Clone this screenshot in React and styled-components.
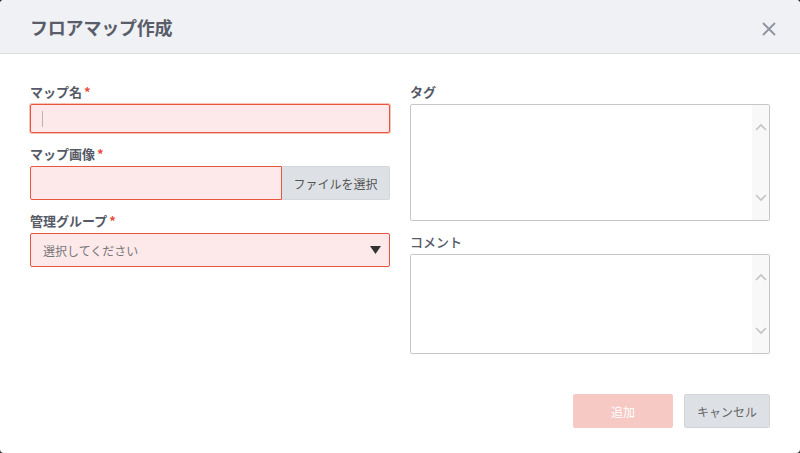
import React from 'react';
import styled, { createGlobalStyle } from 'styled-components';

const GlobalStyle = createGlobalStyle`
  html, body {
    margin: 0;
    padding: 0;
    background: #2b2b2b;
  }
  * {
    box-sizing: border-box;
  }
`;

const font = `"Noto Sans CJK JP", "Noto Sans", sans-serif`;

const Chevron = ({ up }) => (
  <svg width="12" height="8" viewBox="0 0 12 8">
    <path
      d={up ? 'M1 7 L6 2 L11 7' : 'M1 1 L6 6 L11 1'}
      fill="none"
      stroke="#c4c4c4"
      strokeWidth="1.6"
    />
  </svg>
);

const App = () => {
  return (
    <>
      <GlobalStyle />
      <Dialog>
        <Header>
          <Title>フロアマップ作成</Title>
          <CloseButton aria-label="close">
            <svg width="14" height="14" viewBox="0 0 14 14">
              <path d="M1 1 L13 13 M13 1 L1 13" stroke="#8e93a0" strokeWidth="1.8" />
            </svg>
          </CloseButton>
        </Header>
        <Body>
          <Column>
            <Field>
              <Label>
                マップ名<Required>*</Required>
              </Label>
              <TextInput focused>
                <Caret />
              </TextInput>
            </Field>
            <Field>
              <Label>
                マップ画像<Required>*</Required>
              </Label>
              <FileInput>
                <FileName />
                <FileButton>ファイルを選択</FileButton>
              </FileInput>
            </Field>
            <Field>
              <Label>
                管理グループ<Required>*</Required>
              </Label>
              <Select>
                <Placeholder>選択してください</Placeholder>
                <svg width="11" height="8" viewBox="0 0 11 8">
                  <path d="M0 0 L11 0 L5.5 8 Z" fill="#333" />
                </svg>
              </Select>
            </Field>
          </Column>
          <Column>
            <Field>
              <Label>タグ</Label>
              <TextareaBox height={117}>
                <Textarea />
                <ScrollTrack>
                  <Chevron up />
                  <Chevron />
                </ScrollTrack>
              </TextareaBox>
            </Field>
            <Field>
              <Label light>コメント</Label>
              <TextareaBox height={100}>
                <Textarea />
                <ScrollTrack>
                  <Chevron up />
                  <Chevron />
                </ScrollTrack>
              </TextareaBox>
            </Field>
          </Column>
        </Body>
        <Footer>
          <PrimaryButton disabled>追加</PrimaryButton>
          <SecondaryButton>キャンセル</SecondaryButton>
        </Footer>
      </Dialog>
    </>
  );
};

const Dialog = styled.div`
  width: 800px;
  height: 453px;
  background: #fff;
  border-radius: 4px;
  overflow: hidden;
  font-family: ${font};
  display: flex;
  flex-direction: column;
`;

const Header = styled.div`
  height: 54px;
  background: #f0f1f5;
  border-bottom: 1px solid #dcdde2;
  display: flex;
  align-items: center;
  justify-content: space-between;
  padding: 0 24px 0 30px;
`;

const Title = styled.h1`
  margin: 0;
  font-size: 18px;
  font-weight: 700;
  color: #595d69;
  letter-spacing: -0.2px;
`;

const CloseButton = styled.button`
  border: none;
  background: none;
  padding: 0;
  margin-top: 4px;
  display: flex;
  cursor: pointer;
`;

const Body = styled.div`
  display: grid;
  grid-template-columns: 360px 360px;
  column-gap: 20px;
  padding: 29px 30px 0 30px;
`;

const Column = styled.div`
  display: flex;
  flex-direction: column;
`;

const Field = styled.div`
  display: flex;
  flex-direction: column;
  margin-bottom: 12px;
`;

const Label = styled.label`
  font-size: 13px;
  font-weight: ${({ light }) => (light ? 500 : 700)};
  color: #555a66;
  line-height: 18px;
  margin-bottom: 3px;
`;

const Required = styled.span`
  color: #e74c3c;
  margin-left: 2px;
`;

const TextInput = styled.div`
  height: 29px;
  background: #fde8ea;
  border: 1px solid #e8553f;
  border-radius: 2px;
  box-shadow: ${({ focused }) => (focused ? '0 0 0 1px rgba(232, 85, 63, 0.35)' : 'none')};
  display: flex;
  align-items: center;
  padding-left: 11px;
`;

const Caret = styled.span`
  width: 1px;
  height: 16px;
  background: #b5b5b5;
`;

const FileInput = styled.div`
  height: 34px;
  display: flex;
`;

const FileName = styled.div`
  flex: 1;
  background: #fde8ea;
  border: 1px solid #e8553f;
  border-radius: 2px 0 0 2px;
`;

const FileButton = styled.div`
  width: 108px;
  background: #dde1e6;
  border: 1px solid #d3d7dc;
  border-left: none;
  border-radius: 0 2px 2px 0;
  font-size: 12px;
  color: #555;
  display: flex;
  align-items: center;
  justify-content: center;
`;

const Select = styled.div`
  height: 34px;
  background: #fde8ea;
  border: 1px solid #e8553f;
  border-radius: 2px;
  display: flex;
  align-items: center;
  justify-content: space-between;
  padding: 0 8px 0 12px;
`;

const Placeholder = styled.span`
  font-size: 12px;
  color: #777;
`;

const TextareaBox = styled.div`
  height: ${({ height }) => height}px;
  border: 1px solid #c6c6c6;
  border-radius: 2px;
  display: flex;
  overflow: hidden;
`;

const Textarea = styled.div`
  flex: 1;
  background: #fff;
`;

const ScrollTrack = styled.div`
  width: 17px;
  background: #f8f8f8;
  display: flex;
  flex-direction: column;
  justify-content: space-between;
  align-items: center;
  padding: 18px 0 18px;
`;

const Footer = styled.div`
  margin-top: auto;
  display: flex;
  justify-content: flex-end;
  gap: 11px;
  padding: 0 30px 25px 0;
`;

const BaseButton = styled.button`
  height: 34px;
  border-radius: 2px;
  font-family: ${font};
  font-size: 12px;
  cursor: pointer;
`;

const PrimaryButton = styled(BaseButton)`
  width: 100px;
  background: #f6c9c4;
  border: 1px solid #f6c9c4;
  color: #fff;
  cursor: default;
`;

const SecondaryButton = styled(BaseButton)`
  width: 86px;
  background: #dde1e6;
  border: 1px solid #d1d5da;
  color: #666;
`;

export default App;
